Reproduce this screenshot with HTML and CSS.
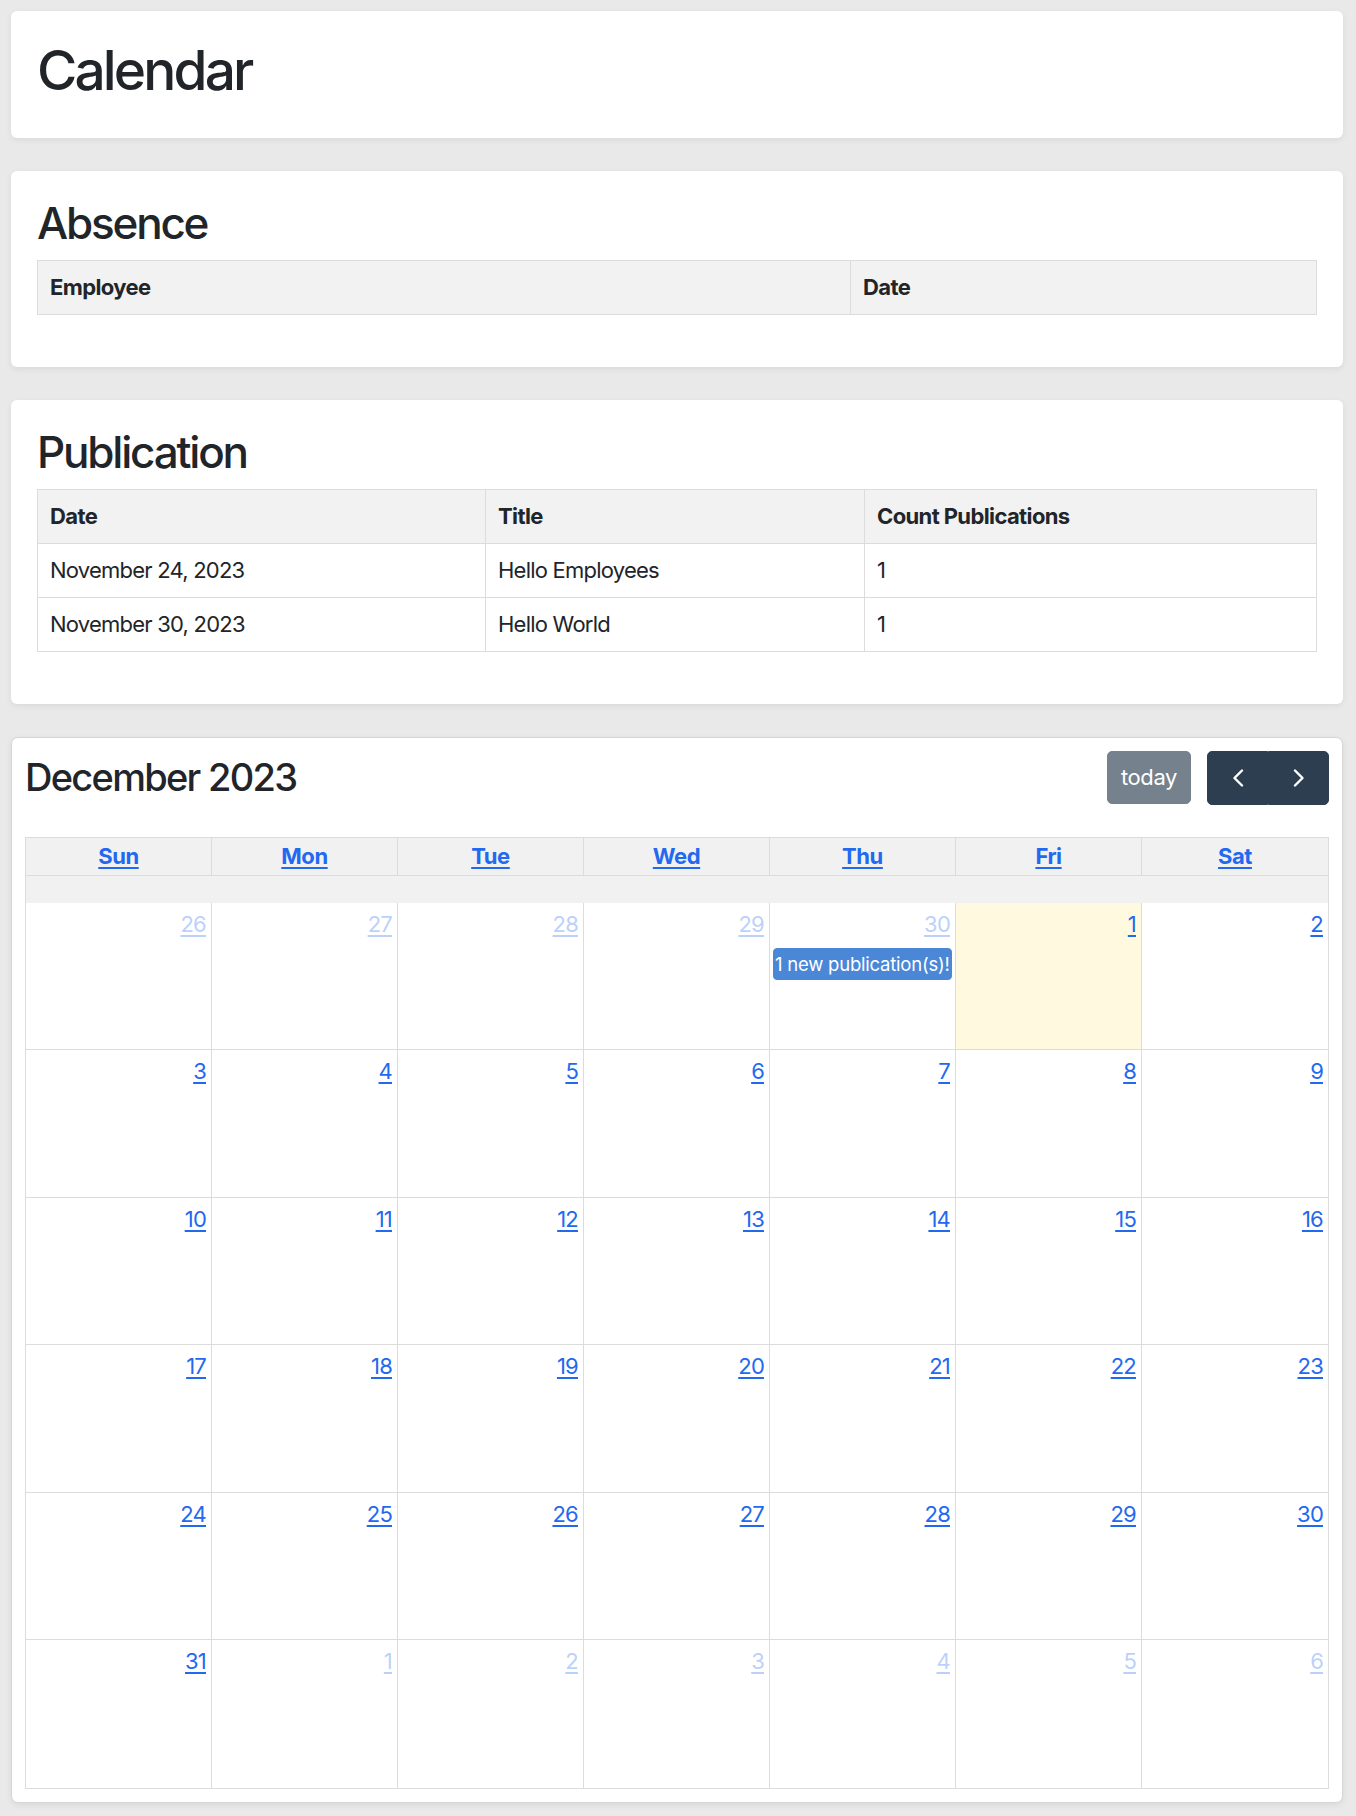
FILE: index.html
```html
<!DOCTYPE html>
<html lang="en">
<head>
<meta charset="utf-8">
<title>Calendar</title>
<link rel="stylesheet" href="styles.css">
</head>
<body>
<main class="page">
  <section class="card">
    <h1 class="page-title">Calendar</h1>
  </section>

  <section class="card">
    <h2 class="section-title">Absence</h2>
    <table class="data-table">
      <colgroup><col class="col-employee"><col></colgroup>
      <thead>
        <tr><th>Employee</th><th>Date</th></tr>
      </thead>
    </table>
  </section>

  <section class="card">
    <h2 class="section-title">Publication</h2>
    <table class="data-table">
      <colgroup><col class="col-date"><col class="col-title"><col></colgroup>
      <thead>
        <tr><th>Date</th><th>Title</th><th>Count Publications</th></tr>
      </thead>
      <tbody>
        <tr><td>November 24, 2023</td><td>Hello Employees</td><td>1</td></tr>
        <tr><td>November 30, 2023</td><td>Hello World</td><td>1</td></tr>
      </tbody>
    </table>
  </section>

  <section class="card card-bordered">
    <div class="toolbar">
      <h2 class="cal-title">December 2023</h2>
      <div class="toolbar-actions">
        <button class="btn btn-today" type="button">today</button>
        <div class="btn-group">
          <button class="btn btn-nav" type="button" aria-label="prev">
            <svg width="12" height="18" viewBox="0 0 12 18"><polyline points="10,1.5 2.5,9 10,16.5" fill="none" stroke="#fff" stroke-width="2.4" stroke-linecap="round" stroke-linejoin="round"/></svg>
          </button>
          <button class="btn btn-nav" type="button" aria-label="next">
            <svg width="12" height="18" viewBox="0 0 12 18"><polyline points="2,1.5 9.5,9 2,16.5" fill="none" stroke="#fff" stroke-width="2.4" stroke-linecap="round" stroke-linejoin="round"/></svg>
          </button>
        </div>
      </div>
    </div>

    <div class="cal">
      <div class="cal-head">
        <div class="cal-hcell"><a href="#">Sun</a></div>
        <div class="cal-hcell"><a href="#">Mon</a></div>
        <div class="cal-hcell"><a href="#">Tue</a></div>
        <div class="cal-hcell"><a href="#">Wed</a></div>
        <div class="cal-hcell"><a href="#">Thu</a></div>
        <div class="cal-hcell"><a href="#">Fri</a></div>
        <div class="cal-hcell"><a href="#">Sat</a></div>
      </div>
      <div class="cal-band"></div>
      <div class="cal-body">
        <div class="day other"><a href="#">26</a></div>
        <div class="day other"><a href="#">27</a></div>
        <div class="day other"><a href="#">28</a></div>
        <div class="day other"><a href="#">29</a></div>
        <div class="day other"><a href="#">30</a><div class="event">1 new publication(s)!</div></div>
        <div class="day today"><a href="#">1</a></div>
        <div class="day"><a href="#">2</a></div>

        <div class="day"><a href="#">3</a></div>
        <div class="day"><a href="#">4</a></div>
        <div class="day"><a href="#">5</a></div>
        <div class="day"><a href="#">6</a></div>
        <div class="day"><a href="#">7</a></div>
        <div class="day"><a href="#">8</a></div>
        <div class="day"><a href="#">9</a></div>

        <div class="day"><a href="#">10</a></div>
        <div class="day"><a href="#">11</a></div>
        <div class="day"><a href="#">12</a></div>
        <div class="day"><a href="#">13</a></div>
        <div class="day"><a href="#">14</a></div>
        <div class="day"><a href="#">15</a></div>
        <div class="day"><a href="#">16</a></div>

        <div class="day"><a href="#">17</a></div>
        <div class="day"><a href="#">18</a></div>
        <div class="day"><a href="#">19</a></div>
        <div class="day"><a href="#">20</a></div>
        <div class="day"><a href="#">21</a></div>
        <div class="day"><a href="#">22</a></div>
        <div class="day"><a href="#">23</a></div>

        <div class="day"><a href="#">24</a></div>
        <div class="day"><a href="#">25</a></div>
        <div class="day"><a href="#">26</a></div>
        <div class="day"><a href="#">27</a></div>
        <div class="day"><a href="#">28</a></div>
        <div class="day"><a href="#">29</a></div>
        <div class="day"><a href="#">30</a></div>

        <div class="day"><a href="#">31</a></div>
        <div class="day other"><a href="#">1</a></div>
        <div class="day other"><a href="#">2</a></div>
        <div class="day other"><a href="#">3</a></div>
        <div class="day other"><a href="#">4</a></div>
        <div class="day other"><a href="#">5</a></div>
        <div class="day other"><a href="#">6</a></div>
      </div>
    </div>
  </section>
</main>
</body>
</html>
```

FILE: styles.css
```css
* { box-sizing: border-box; }

html, body {
  margin: 0;
  padding: 0;
}

body {
  background: #e9e9e9;
  color: #212529;
  font-family: Inter, "Noto Sans", "Liberation Sans", sans-serif;
  font-size: 22px;
  line-height: 1.5;
  letter-spacing: -0.035em;
}

.page {
  display: flex;
  flex-direction: column;
  gap: 33px;
  padding: 11px 13px 14px 11px;
}

.card {
  background: #fff;
  border-radius: 6px;
  padding: 26px;
  box-shadow: 0 2px 6px rgba(0, 0, 0, 0.07);
}

.card-bordered {
  border: 1px solid #d6d6d6;
  padding: 13px;
  border-radius: 7px;
}

.page-title {
  margin: 0 0 9px;
  font-size: 55px;
  font-weight: 500;
  line-height: 1.2;
  letter-spacing: -0.052em;
}

.section-title {
  margin: 0 0 10px;
  font-size: 44px;
  font-weight: 500;
  line-height: 1.2;
  letter-spacing: -0.05em;
}

.data-table {
  width: 100%;
  border-collapse: collapse;
  table-layout: fixed;
  margin-bottom: 26px;
}

.data-table th,
.data-table td {
  border: 1px solid #dcdcdc;
  padding: 10px 12px;
  line-height: 33px;
  text-align: left;
  vertical-align: top;
}

.data-table th {
  background: #f2f2f2;
  font-weight: 700;
  letter-spacing: -0.028em;
}

.col-employee { width: 813px; }
.col-date { width: 448px; }
.col-title { width: 379px; }

/* Calendar toolbar */
.toolbar {
  display: flex;
  align-items: center;
  justify-content: space-between;
  height: 54px;
  margin-bottom: 32px;
}

.cal-title {
  margin: 0;
  font-size: 38px;
  font-weight: 500;
  line-height: 1.21;
  letter-spacing: -0.045em;
}

.toolbar-actions {
  display: flex;
  align-items: center;
  gap: 16px;
}

.btn {
  font-family: inherit;
  font-size: 22px;
  line-height: 33px;
  letter-spacing: -0.02em;
  color: #fff;
  background: #2c3e50;
  border: 1px solid #2c3e50;
  height: 53px;
  display: inline-flex;
  align-items: center;
  justify-content: center;
  cursor: pointer;
}

.btn-today {
  padding: 0 13px;
  width: 84px;
  border-radius: 5px;
  opacity: 0.65;
}

.btn-group {
  display: flex;
}

.btn-nav {
  width: 61px;
  height: 54px;
  padding: 0;
}

.btn-nav:first-child {
  border-radius: 5px 0 0 5px;
}

.btn-nav:last-child {
  border-radius: 0 5px 5px 0;
}

/* Calendar grid */
.cal {
  border: 1px solid #dcdcdc;
}

.cal-head {
  display: grid;
  grid-template-columns: repeat(7, 1fr);
  background: #f1f1f1;
  border-bottom: 1px solid #dcdcdc;
}

.cal-hcell {
  text-align: center;
  padding: 2px 4px;
  font-weight: 700;
  line-height: 33px;
  letter-spacing: -0.02em;
  border-right: 1px solid #dcdcdc;
}

.cal-hcell:last-child { border-right: 0; }

.cal-hcell a,
.day a {
  color: #2369f0;
  text-decoration: underline;
  text-underline-offset: 3px;
}

.cal-band {
  height: 27px;
  background: #f1f1f1;
}

.cal-body {
  display: grid;
  grid-template-columns: repeat(7, 1fr);
  grid-template-rows: repeat(6, 1fr);
  height: 885px;
}

.day {
  display: flex;
  flex-direction: column;
  align-items: flex-end;
  padding: 5px 0 0;
  border-right: 1px solid #dcdcdc;
  border-bottom: 1px solid #dcdcdc;
  min-width: 0;
}

.day:nth-child(7n) { border-right: 0; }
.day:nth-last-child(-n+7) { border-bottom: 0; }

.day > a {
  padding: 0 5px;
  line-height: 33px;
}

.day.other > a { opacity: 0.3; }

.day.today {
  background: rgba(255, 220, 40, 0.15);
}

.event {
  align-self: stretch;
  margin: 7px 3px 0;
  background: #4a87d6;
  border: 1px solid #4a87d6;
  border-radius: 4px;
  color: #fff;
  font-size: 18.5px;
  letter-spacing: -0.012em;
  line-height: 28px;
  padding: 1px 1px;
  white-space: nowrap;
  overflow: hidden;
}
```
